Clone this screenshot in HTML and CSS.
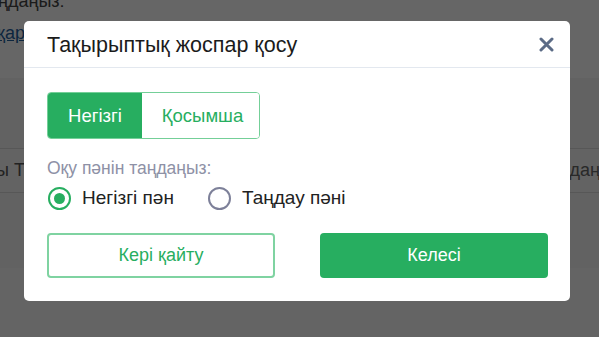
FILE: index.html
```html
<!DOCTYPE html>
<html lang="kk">
<head>
<meta charset="utf-8">
<title>Тақырыптық жоспар қосу</title>
<link rel="stylesheet" href="styles.css">
</head>
<body>
<div class="page">
  <div class="page-top">
    <div class="page-hint">ңдаңыз:</div>
    <a class="page-link" href="#">қар</a>
  </div>
  <div class="page-content">
    <div class="page-row">
      <span class="cell-left">ы Та</span>
      <span class="cell-right">даңы</span>
    </div>
  </div>
  <div class="page-footer"></div>
</div>

<div class="overlay">
  <div class="modal">
    <div class="modal-header">
      <h2 class="modal-title">Тақырыптық жоспар қосу</h2>
      <button class="close" aria-label="Жабу">
        <svg width="15" height="15" viewBox="0 0 15 15"><path d="M2 2L13 13M13 2L2 13" stroke="#5b6b86" stroke-width="3" stroke-linecap="round"/></svg>
      </button>
    </div>
    <div class="modal-body">
      <div class="tabs">
        <button class="tab active">Негізгі</button>
        <button class="tab">Қосымша</button>
      </div>
      <div class="field-label">Оқу пәнін таңдаңыз:</div>
      <div class="radios">
        <label class="radio"><span class="circle checked"></span>Негізгі пән</label>
        <label class="radio"><span class="circle"></span>Таңдау пәні</label>
      </div>
      <div class="actions">
        <button class="btn btn-outline">Кері қайту</button>
        <button class="btn btn-primary">Келесі</button>
      </div>
    </div>
  </div>
</div>
</body>
</html>
```

FILE: styles.css
```css
* { box-sizing: border-box; }
html, body { margin: 0; padding: 0; }
body {
  width: 599px;
  height: 337px;
  overflow: hidden;
  font-family: "Liberation Sans", Arial, sans-serif;
  background: #ffffff;
  position: relative;
}
.page {
  display: flex;
  flex-direction: column;
  height: 337px;
}
.page-top {
  height: 78px;
  display: flex;
  flex-direction: column;
  align-items: flex-start;
}
.page-hint {
  font-size: 18px;
  line-height: 18px;
  color: #444;
  margin-top: -8px;
  margin-left: -2px;
}
.page-link {
  font-size: 18px;
  line-height: 20px;
  color: #1f5f9e;
  text-decoration: underline;
  margin-top: 13px;
  margin-left: -3px;
}
.page-content {
  background: #f4f4f4;
  height: 190px;
  padding-top: 70px;
}
.page-row {
  height: 45px;
  border-top: 1px solid #d9d9d9;
  border-bottom: 1px solid #d9d9d9;
  display: flex;
  justify-content: space-between;
  align-items: center;
  font-size: 18px;
  color: #555;
  background: #f8f8f8;
}
.cell-left { margin-left: -4px; }
.cell-right { margin-right: -14px; color: #666; }
.page-footer {
  flex: 1;
  background: #fbfbfb;
}

.overlay {
  position: absolute;
  inset: 0;
  background: rgba(0, 0, 0, 0.6);
  padding: 21px 0 0 24px;
}
.modal {
  width: 546px;
  height: 280px;
  background: #fff;
  border-radius: 5px;
  display: flex;
  flex-direction: column;
}
.modal-header {
  height: 47px;
  border-bottom: 1px solid #e3e8ef;
  display: flex;
  align-items: center;
  justify-content: space-between;
  padding: 0 14px 0 23px;
}
.modal-title {
  margin: 0;
  font-size: 21.5px;
  font-weight: normal;
  color: #1b1b1b;
  padding-top: 2px;
}
.close {
  border: 0;
  background: none;
  padding: 0;
  width: 20px;
  height: 20px;
  display: flex;
  align-items: center;
  justify-content: center;
  cursor: pointer;
}
.modal-body {
  padding: 24px 22px 0 23px;
  display: flex;
  flex-direction: column;
}
.tabs {
  display: flex;
  width: 213px;
  height: 47px;
  border: 1px solid #74cf98;
  border-radius: 4px;
  overflow: hidden;
}
.tab {
  border: 0;
  font-family: inherit;
  font-size: 18.5px;
  background: #fff;
  color: #27ae60;
  padding: 0;
}
.tab.active {
  width: 94px;
  background: #27ae60;
  color: #fff;
}
.tab:not(.active) { flex: 1; padding-left: 4px; }
.field-label {
  margin-top: 20px;
  font-size: 17.5px;
  line-height: 18px;
  color: #8e91a6;
  height: 18px;
}
.radios {
  display: flex;
  gap: 33px;
  margin-top: 10px;
  height: 22px;
  align-items: center;
}
.radio {
  display: flex;
  align-items: center;
  gap: 11px;
  font-size: 19px;
  color: #222;
}
.circle {
  width: 23px;
  height: 23px;
  border-radius: 50%;
  border: 2px solid #7d8099;
  display: flex;
  align-items: center;
  justify-content: center;
  margin-left: 1px;
}
.circle.checked { border: 2.5px solid #27ae60; }
.circle.checked::after {
  content: "";
  width: 11px;
  height: 11px;
  border-radius: 50%;
  background: #27ae60;
}
.actions {
  display: flex;
  gap: 45px;
  margin-top: 24px;
}
.btn {
  width: 228px;
  height: 45px;
  border-radius: 4px;
  font-family: inherit;
  font-size: 18px;
  cursor: pointer;
}
.btn-outline {
  background: #fff;
  border: 2px solid #7fd3a1;
  color: #27ae60;
}
.btn-primary {
  background: #27ae60;
  border: 0;
  color: #fff;
}
```
